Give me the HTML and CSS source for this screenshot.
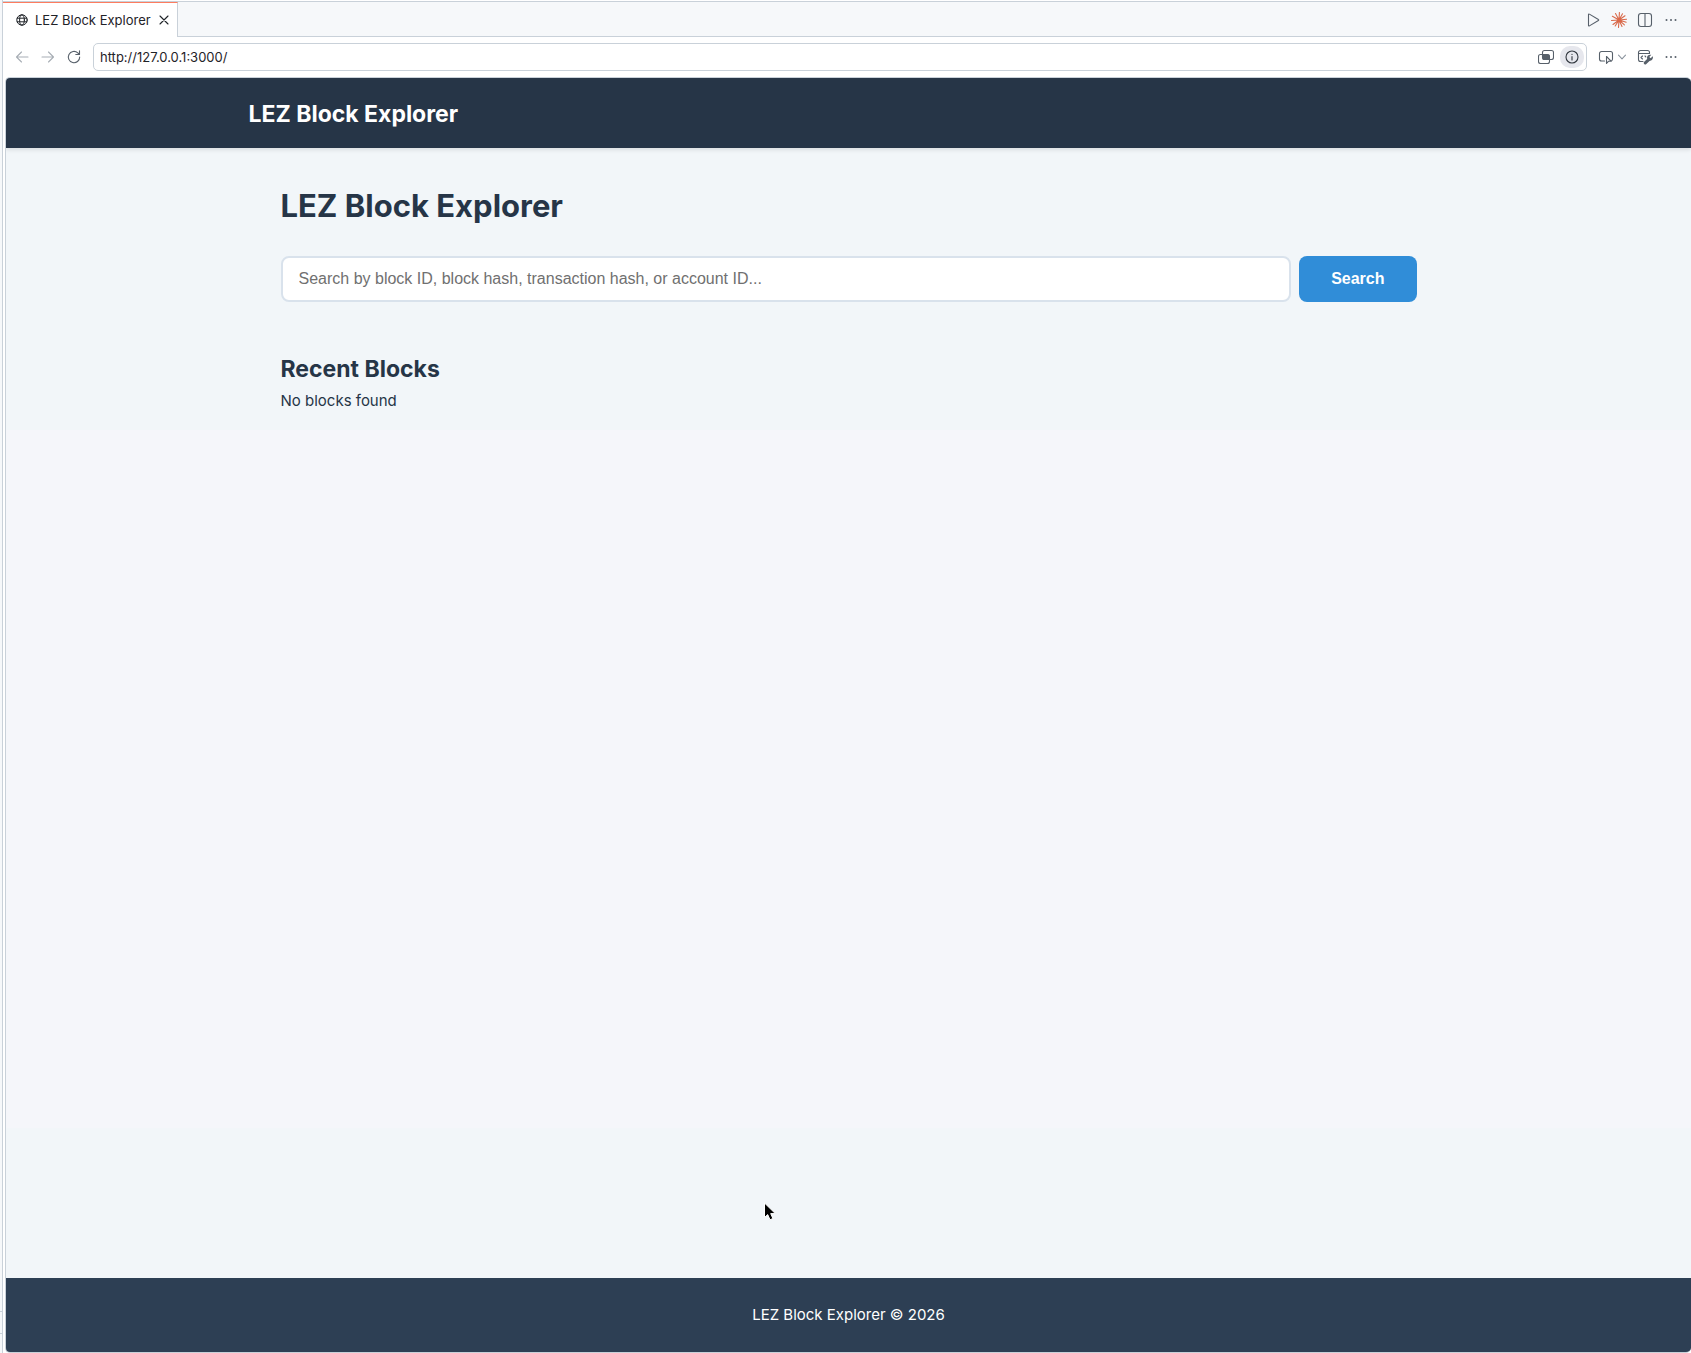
FILE: index.html
```html
<!DOCTYPE html>
<html lang="en">
<head>
  <meta charset="UTF-8">
  <title>LEZ Block Explorer</title>
  <meta name="viewport" content="width=device-width, initial-scale=1.0">
  <link rel="stylesheet" href="styles.css">
</head>
<body>

  <div class="side-edge">
    <span class="edge-line"></span>
    <span class="edge-line"></span>
  </div>

  <div class="editor">

    <!-- Tab bar -->
    <div class="tab-bar">
      <div class="tab">
        <svg class="tab-globe" width="12" height="12" viewBox="0 0 12 12" aria-hidden="true">
          <circle cx="6" cy="6" r="5.2"/>
          <ellipse cx="6" cy="6" rx="2.4" ry="5.2"/>
          <path d="M1.2 4.2h9.600M1.200 7.800h9.600"/>
        </svg>
        <span>LEZ Block Explorer</span>
        <button class="icon-button tab-close" aria-label="Close tab">
          <svg width="10" height="10" viewBox="0 0 10 10"><path d="M1 1l8 8M9 1L1 9"/></svg>
        </button>
      </div>
      <div class="tab-actions">
        <button class="icon-button" aria-label="Run">
          <svg width="16" height="16" viewBox="0 0 16 16"><path d="M3.500 2.600v10.800c0 .5.5.8.9.5l9-5.400c.4-.2.4-.8 0-1l-9-5.400c-.4-.3-.9 0-.9.500z"/></svg>
        </button>
        <button class="icon-button burst" aria-label="Claude">
          <svg width="16" height="16" viewBox="0 0 16 16"><path d="M8 8L8.400 .5M8 8l3.500-6.200M8 8l6-4.200M8 8l7.500-.8M8 8l7.200 2.200M8 8l5.400 4.800M8 8l3 6.500M8 8l-.5 7.500M8 8l-3.800 6M8 8l-6 4.500M8 8L.5 8.500M8 8L1.400 4.300M8 8L4.500 1.500"/></svg>
        </button>
        <button class="icon-button" aria-label="Split editor">
          <svg width="16" height="16" viewBox="0 0 16 16"><rect x="1.500" y="1.500" width="13" height="13" rx="2.500"/><path d="M8 1.500v13"/></svg>
        </button>
        <button class="icon-button dots" aria-label="More actions">
          <svg width="16" height="16" viewBox="0 0 16 16"><circle cx="3.500" cy="8" r="1"/><circle cx="8" cy="8" r="1"/><circle cx="12.500" cy="8" r="1"/></svg>
        </button>
      </div>
    </div>

    <!-- Browser toolbar -->
    <div class="toolbar">
      <div class="nav-buttons">
        <button class="icon-button muted" aria-label="Back">
          <svg width="16" height="16" viewBox="0 0 16 16"><path d="M14 8H2.500M7.500 3L2.500 8l5 5"/></svg>
        </button>
        <button class="icon-button muted" aria-label="Forward">
          <svg width="16" height="16" viewBox="0 0 16 16"><path d="M2 8h11.500M8.500 3l5 5-5 5"/></svg>
        </button>
        <button class="icon-button" aria-label="Reload">
          <svg width="16" height="16" viewBox="0 0 16 16"><path d="M13.700 8a5.700 5.700 0 1 1-1.900-4.200L13.500 5.500M13.500 1.800v3.700H9.800"/></svg>
        </button>
      </div>
      <div class="address">
        <input class="address-input" type="text" value="http://127.0.0.1:3000/" aria-label="Address">
        <button class="icon-button" aria-label="Open tabs">
          <svg width="16" height="16" viewBox="0 0 16 16"><rect x="4.500" y="1.500" width="11" height="9" rx="2"/><rect x=".5" y="5.500" width="11" height="9" rx="2"/><rect class="solid" x="4.500" y="5.500" width="7" height="5" rx="1"/></svg>
        </button>
        <button class="icon-button info" aria-label="Page information">
          <svg width="14" height="14" viewBox="0 0 14 14"><circle cx="7" cy="7" r="6"/><path d="M7 6.500V10M7 4.200v.300"/></svg>
        </button>
      </div>
      <div class="tool-buttons">
        <button class="icon-button" aria-label="Select element">
          <svg width="16" height="16" viewBox="0 0 16 16"><path d="M6.500 12H3.500a2 2 0 0 1-2-2V4.500a2 2 0 0 1 2-2h9a2 2 0 0 1 2 2V10a2 2 0 0 1-.8 1.600M8.500 7.500v7l1.900-2.200h2.900z"/></svg>
        </button>
        <button class="icon-button chevron" aria-label="Select options">
          <svg width="8" height="8" viewBox="0 0 8 8"><path d="M.5 2.200L4 5.800l3.500-3.600"/></svg>
        </button>
        <button class="icon-button" aria-label="Developer tools">
          <svg width="16" height="16" viewBox="0 0 16 16"><path d="M6 12.500H3.500a2 2 0 0 1-2-2V3.500a2 2 0 0 1 2-2h7a2 2 0 0 1 2 2v1M1.500 4.500h11M5.500 7L4 8.500 5.500 10M8 7l.8.800"/><path class="wrench" d="M8.300 13.900L12 10.300"/><path class="solid" d="M15.800 7.200l-2.200 2.100-1.300-1.300 2-2.200c-2.700-.7-5 1.500-4.100 3.900l2 2c2.500.6 4.400-2.100 3.600-4.500z"/></svg>
        </button>
        <button class="icon-button dots" aria-label="More tools">
          <svg width="16" height="16" viewBox="0 0 16 16"><circle cx="3.500" cy="8" r="1"/><circle cx="8" cy="8" r="1"/><circle cx="12.500" cy="8" r="1"/></svg>
        </button>
      </div>
    </div>

    <!-- Page -->
    <div class="page">
      <header class="page-header">
        <nav class="page-nav">
          <a href="/" class="nav-logo">LEZ Block Explorer</a>
        </nav>
      </header>

      <main class="page-main">
        <h1>LEZ Block Explorer</h1>
        <form class="search-form">
          <input class="search-input" type="text" placeholder="Search by block ID, block hash, transaction hash, or account ID..." aria-label="Search">
          <button class="search-button" type="submit">Search</button>
        </form>
        <section>
          <h2>Recent Blocks</h2>
          <p>No blocks found</p>
        </section>
      </main>

      <footer class="page-footer">
        <p>LEZ Block Explorer © 2026</p>
      </footer>
    </div>
  </div>

  <svg class="cursor" width="14" height="20" viewBox="0 0 14 20" aria-hidden="true">
    <path d="M1.500 1v14.500l3.200-2.900 2.300 5.200 2.900-1.300-2.200-4.900h4.600z"/>
  </svg>

</body>
</html>
```

FILE: styles.css
```css
* {
  box-sizing: border-box;
  margin: 0;
  padding: 0;
}

body {
  display: flex;
  min-height: 100vh;
  font-family: Inter, sans-serif;
  background-color: #fff;
  color: #263547;
}

button,
input {
  font-family: inherit;
}

.side-edge {
  display: flex;
  flex-direction: column;
  justify-content: flex-end;
  gap: 21px;
  width: 3px;
  padding-bottom: 19px;
  border-right: 1px solid #c9d1d9;
  background-color: #f6f8fa;
}

.edge-line {
  height: 1px;
  background-color: #c9d1d9;
}

.editor {
  flex: 1;
  display: flex;
  flex-direction: column;
  min-width: 0;
  padding-top: 1px;
}

.icon-button {
  display: flex;
  align-items: center;
  justify-content: center;
  border: none;
  background: none;
  color: #57606a;
  cursor: pointer;
}

.icon-button svg,
.tab-globe {
  fill: none;
  stroke: currentColor;
  stroke-width: 1.1;
  stroke-linecap: round;
  stroke-linejoin: round;
}

.tab-globe {
  stroke-width: 1;
}

.icon-button .solid,
.dots svg {
  fill: currentColor;
  stroke: none;
}

.icon-button .wrench {
  stroke-width: 3;
}

/* Tab bar */
.tab-bar {
  display: flex;
  justify-content: space-between;
  height: 36px;
  border-top: 1px solid #c9d1d9;
  background-color: #f6f8fa;
  box-shadow: inset 0 -1px #c9d1d9;
}

.tab {
  display: flex;
  align-items: center;
  padding: 0 8px 0 13px;
  border-top: 1px solid #fd7c5f;
  border-right: 1px solid #c9d1d9;
  background-color: #fff;
  color: #1f2328;
  font-size: 13px;
}

.tab-globe {
  margin-right: 7px;
}

.tab-close {
  margin-left: 8px;
  color: #1f2328;
}

.tab-actions {
  display: flex;
  align-items: center;
  gap: 10px;
  padding-right: 12px;
}

.burst {
  color: #d9694a;
}

/* Toolbar */
.toolbar {
  display: flex;
  align-items: center;
  height: 40px;
  padding: 0 12px 0 11px;
}

.nav-buttons {
  display: flex;
  gap: 10px;
  margin-right: 11px;
}

.muted {
  color: #a8aeb5;
}

.address {
  flex: 1;
  display: flex;
  align-items: center;
  gap: 6px;
  height: 28px;
  padding: 0 2px 0 6px;
  border: 1px solid #c9d1d9;
  border-radius: 5px;
}

.address-input {
  flex: 1;
  border: none;
  outline: none;
  background: none;
  color: #1f2328;
  font-size: 13px;
}

.info {
  width: 24px;
  height: 22px;
  border-radius: 10px;
  background-color: #e6e7ed;
  color: #32383f;
}

.tool-buttons {
  display: flex;
  align-items: center;
  margin-left: 11px;
}

.chevron {
  margin: 0 11px 0 4px;
  color: #8b949e;
}

.tool-buttons .dots {
  margin-left: 10px;
}

/* Page */
.page {
  flex: 1;
  display: flex;
  flex-direction: column;
  margin-left: 2px;
  border: 1px solid #c9d1d9;
  border-right: none;
  border-radius: 5px;
  overflow: hidden;
  background: linear-gradient(#f2f6f9 352px, #f5f6fa 352px calc(100% - 224px), #f2f6f9 calc(100% - 224px));
  font-size: 15px;
  line-height: 26px;
}

.page-header {
  padding: 16px 32px 14px;
  background-color: #263547;
  box-shadow: 0 2px 4px rgba(0, 0, 0, 0.1);
}

.page-nav {
  max-width: 1200px;
  margin: 0 auto;
}

.nav-logo {
  display: block;
  color: #fff;
  font-size: 23px;
  font-weight: 700;
  line-height: 40px;
  text-decoration: none;
}

.page-main {
  flex: 1;
  width: 100%;
  max-width: 1200px;
  margin: 0 auto;
  padding: 32px;
}

.page-main h1 {
  margin-bottom: 24px;
  font-size: 31px;
  line-height: 52px;
}

.search-form {
  display: flex;
  gap: 8px;
  margin-bottom: 48px;
}

.search-input {
  flex: 1;
  height: 46px;
  padding: 0 16px;
  border: 2px solid #d9e2ec;
  border-radius: 8px;
  background-color: #fff;
  font-family: "Liberation Sans", Arial, sans-serif;
  font-size: 16px;
}

.search-input::placeholder {
  color: #707070;
}

.search-button {
  padding: 0 32px;
  border: none;
  border-radius: 8px;
  background-color: #308dd8;
  color: #fff;
  font-family: "Liberation Sans", Arial, sans-serif;
  font-size: 16px;
  font-weight: 600;
  cursor: pointer;
}

.page-main h2 {
  font-size: 23px;
  line-height: 38px;
}

.page-footer {
  padding: 24px;
  background-color: #2d3f54;
  color: #fff;
  text-align: center;
}

/* Mouse pointer */
.cursor {
  position: absolute;
  left: 763px;
  top: 1202px;
  fill: #000;
  stroke: #fff;
  pointer-events: none;
}
```
